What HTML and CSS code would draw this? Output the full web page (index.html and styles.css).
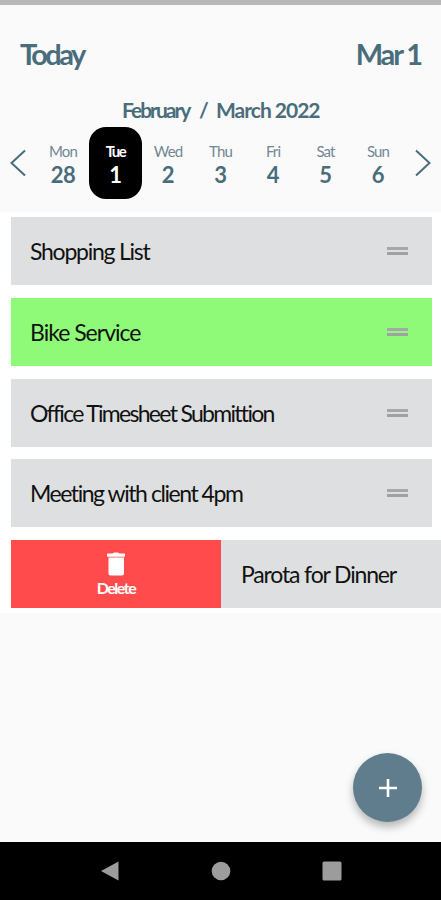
FILE: index.html
```html
<!DOCTYPE html>
<html lang="en">
<head>
    <meta charset="UTF-8">
    <meta name="viewport" content="width=device-width, initial-scale=1.0">
    <title>Tasks</title>
    <link rel="stylesheet" href="styles.css">
</head>
<body>
    <div class="status-bar"></div>
    <header class="header">
        <span class="today">Today</span>
        <span class="date">Mar 1</span>
    </header>

    <section class="calendar">
        <div class="month"><span class="feb">February</span><span class="slash">/</span><span class="march">March 2022</span></div>
        <div class="week">
            <svg class="arrow" width="16" height="28" viewBox="0 0 16 28"><path d="M15 1.5 1.5 14 15 26.500"/></svg>
            <div class="days">
                <div class="day"><span class="name">Mon</span><span class="num">28</span></div>
                <div class="day selected"><span class="name">Tue</span><span class="num">1</span></div>
                <div class="day"><span class="name">Wed</span><span class="num">2</span></div>
                <div class="day"><span class="name">Thu</span><span class="num">3</span></div>
                <div class="day"><span class="name">Fri</span><span class="num">4</span></div>
                <div class="day"><span class="name">Sat</span><span class="num">5</span></div>
                <div class="day"><span class="name">Sun</span><span class="num">6</span></div>
            </div>
            <svg class="arrow" width="16" height="28" viewBox="0 0 16 28"><path d="M1 1.500 14.500 14 1 26.500"/></svg>
        </div>
    </section>

    <main class="tasks">
        <div class="task"><span class="title shopping">Shopping List</span><span class="handle"></span></div>
        <div class="task done"><span class="title bike">Bike Service</span><span class="handle"></span></div>
        <div class="task"><span class="title office">Office Timesheet Submittion</span><span class="handle"></span></div>
        <div class="task"><span class="title meeting">Meeting with client 4pm</span><span class="handle"></span></div>
        <div class="swiped">
            <button class="delete">
                <svg width="20" height="24" viewBox="0 0 20 24" fill="#fff"><path d="M6.500 1.500 8 .5h4l1.500 1H19v3.200H1V1.500zM2.500 5.400h15.500v16a2 2 0 0 1-2 2H4.500a2 2 0 0 1-2-2z"/></svg>
                <span>Delete</span>
            </button>
            <div class="task"><span class="title parota">Parota for Dinner</span></div>
        </div>
    </main>

    <div class="footer">
        <button class="add">
            <svg width="20" height="20" viewBox="0 0 20 20"><path d="M10 1v18M1 10h18"/></svg>
        </button>
    </div>

    <nav class="navbar">
        <svg width="20" height="20" viewBox="0 0 20 20"><path d="M1 10 18.500.500v19z"/></svg>
        <svg width="20" height="20" viewBox="0 0 20 20"><circle cx="10" cy="10" r="9.300"/></svg>
        <svg width="20" height="20" viewBox="0 0 20 20"><rect x=".5" y=".5" width="19" height="19" rx="1.500"/></svg>
    </nav>
</body>
</html>
```
FILE: styles.css
```css
* {
    box-sizing: border-box;
}

body {
    display: flex;
    flex-direction: column;
    height: 900px;
    margin: 0;
    overflow: hidden;
    background-color: #fafafa;
    color: #4a6d7c;
    font-family: Lato, sans-serif;
    white-space: nowrap;
}

button {
    padding: 0;
    border: none;
    font-family: inherit;
    cursor: pointer;
}

.status-bar {
    height: 5px;
    background-color: #b8b8b8;
}

.header {
    display: flex;
    justify-content: space-between;
    padding: 30px 20px 0;
    height: 92px;
    font-size: 29px;
    line-height: 38px;
    font-weight: bold;
}

.today {
    letter-spacing: -2.6px;
}

.date {
    letter-spacing: -2.1px;
}

.calendar {
    height: 115px;
}

.month {
    display: flex;
    padding-left: 122px;
    height: 30px;
    font-size: 21px;
    line-height: 26px;
    font-weight: bold;
}

.feb {
    width: 77px;
    letter-spacing: -2px;
}

.slash {
    width: 17px;
}

.march {
    letter-spacing: -1px;
}

.week {
    display: flex;
    align-items: center;
    justify-content: space-between;
    padding: 0 10px;
    height: 72px;
}

.arrow {
    fill: none;
    stroke: #4a6d7c;
    stroke-width: 2;
}

.days {
    display: flex;
}

.day {
    display: flex;
    flex-direction: column;
    align-items: center;
    width: 52.5px;
    height: 72px;
    padding-top: 15px;
}

.name {
    font-size: 15px;
    line-height: 19px;
    letter-spacing: -0.9px;
    color: #718894;
}

.num {
    font-size: 22px;
    line-height: 28px;
    font-weight: bold;
    letter-spacing: -0.5px;
}

.selected {
    border-radius: 17px;
    background-color: #000;
    color: #fff;
}

.selected .name {
    color: #fff;
    font-weight: bold;
    letter-spacing: -1.5px;
}

.tasks {
    display: flex;
    flex-direction: column;
    gap: 12.75px;
    height: 401px;
    padding: 5px 9px 0 11px;
    background-color: #fff;
}

.task {
    display: flex;
    align-items: center;
    justify-content: space-between;
    height: 68px;
    padding: 0 24px 0 19px;
    background-color: #dddfe0;
    color: #111;
}

.done {
    background-color: #8ffa78;
}

.title {
    font-size: 23px;
    line-height: 30px;
}

.shopping {
    letter-spacing: -1.25px;
}

.bike {
    letter-spacing: -1px;
}

.office {
    letter-spacing: -1.7px;
}

.meeting {
    letter-spacing: -1.45px;
}

.parota {
    letter-spacing: -1.15px;
}

.handle {
    width: 21px;
    height: 8px;
    border-top: 3px solid #a6a7a8;
    border-bottom: 3px solid #a0a1a2;
}

.swiped {
    display: flex;
    width: 430px;
}

.swiped .task {
    flex: 1;
    padding-left: 20px;
}

.delete {
    display: flex;
    flex-direction: column;
    align-items: center;
    width: 210px;
    height: 68px;
    padding-top: 12px;
    background-color: #ff4b4b;
    color: #fff;
    font-size: 16px;
    line-height: 24px;
    font-weight: bold;
    letter-spacing: -1.5px;
}

.footer {
    display: flex;
    flex: 1;
    justify-content: flex-end;
    align-items: flex-end;
    padding: 0 19px 20px;
}

.add {
    display: flex;
    align-items: center;
    justify-content: center;
    width: 69px;
    height: 69px;
    border-radius: 50%;
    background-color: #607d8e;
    box-shadow: 0 5px 8px rgba(0, 0, 0, 0.28);
}

.add path {
    stroke: #fff;
    stroke-width: 2.6;
}

.navbar {
    display: flex;
    justify-content: center;
    align-items: center;
    gap: 91px;
    height: 58px;
    background-color: #000;
    fill: #9c9c9c;
}
```
